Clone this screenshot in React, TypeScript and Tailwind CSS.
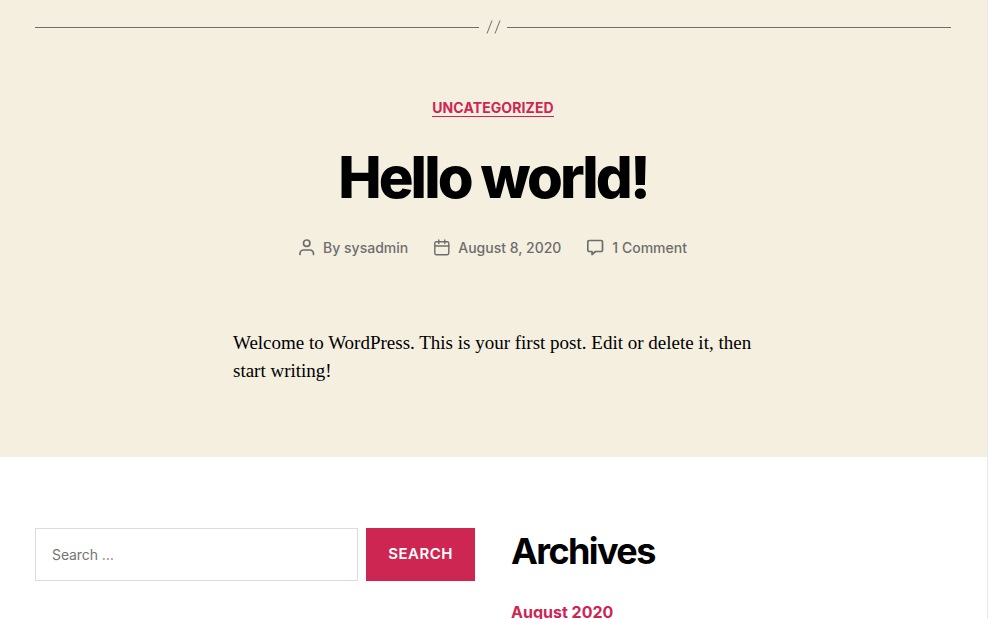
import React from "react";

function UserIcon() {
  return (
    <svg width="16" height="18" viewBox="0 0 16 18" fill="none" stroke="#6d6d6d" strokeWidth="1.7" strokeLinecap="round" aria-hidden="true">
      <path d="M1 15.500v-1A3.500 3.500 0 0 1 4.500 11h6.500A3.500 3.500 0 0 1 14.500 14.500v1" />
      <circle cx="7.700" cy="4.200" r="3.200" />
    </svg>
  );
}

function CalendarIcon() {
  return (
    <svg width="16" height="18" viewBox="0 0 16 18" fill="none" stroke="#6d6d6d" strokeWidth="1.4" strokeLinecap="round" aria-hidden="true">
      <rect x=".8" y="2.700" width="14" height="13" rx="1.600" />
      <path d="M1 7h14M4.800 1v3.500M10.800 1v3.500" />
    </svg>
  );
}

function CommentIcon() {
  return (
    <svg width="17" height="18" viewBox="0 0 17 18" fill="none" stroke="#6d6d6d" strokeWidth="1.7" strokeLinejoin="round" aria-hidden="true">
      <path d="M2.300 1.500h11.700a1.500 1.500 0 0 1 1.500 1.500v8a1.500 1.500 0 0 1-1.500 1.500H8.500L5 15.500v-3H2.300A1.500 1.500 0 0 1 .8 11V3a1.500 1.500 0 0 1 1.500-1.500z" />
    </svg>
  );
}

export default function App() {
  return (
    <div className="min-h-screen border-r border-[#e8e8e8] bg-white font-['Inter',sans-serif] text-black">
      <main className="bg-[#f5efe0] pt-5 pr-9 pb-[72px] pl-[35px]">
        <div className="flex items-center gap-[6px]" role="separator">
          <span className="h-px flex-1 bg-[#6d6d6d]" />
          <svg width="16" height="14" viewBox="0 0 16 14" stroke="#6d6d6d" fill="none" aria-hidden="true">
            <path d="M2 13.500 7 .5M10 13.500 15 .5" />
          </svg>
          <span className="h-px flex-1 bg-[#6d6d6d]" />
        </div>
        <article>
          <header className="flex flex-col items-center pt-[66px]">
            <a href="#category" className="border-b border-[#cd2653] text-sm leading-4 font-bold tracking-[0.1px] text-[#cd2653] uppercase">Uncategorized</a>
            <h1 className="mt-7 text-[58px] leading-[64px] font-extrabold tracking-[-0.05em]">Hello world!</h1>
            <ul className="mt-[29px] flex items-center gap-[26px] text-sm leading-5 font-medium text-[#6d6d6d]">
              <li className="flex items-center gap-2"><UserIcon /><span>By <a href="#author">sysadmin</a></span></li>
              <li className="flex items-center gap-2"><CalendarIcon /><a href="#date">August 8, 2020</a></li>
              <li className="flex items-center gap-2"><CommentIcon /><a href="#comments">1 Comment</a></li>
            </ul>
          </header>
          <p className="mx-auto mt-[71px] max-w-[520px] font-['Liberation_Serif',serif] text-[19px] leading-7">
            Welcome to WordPress. This is your first post. Edit or delete it, then start writing!
          </p>
        </article>
      </main>
      <footer className="grid grid-cols-2 gap-9 pt-[71px] pr-9 pl-[35px]">
        <form className="flex items-start gap-2" onSubmit={(e) => e.preventDefault()}>
          <input type="search" aria-label="Search for:" placeholder="Search …" className="h-[53px] min-w-0 flex-1 border border-[#dcdcdc] px-4 text-sm tracking-[-0.1px] placeholder:text-[#757575]" />
          <button type="submit" className="h-[53px] bg-[#cd2653] px-[22px] text-[15px] font-semibold tracking-[0.5px] text-white uppercase">Search</button>
        </form>
        <section>
          <h2 className="text-4xl leading-[46px] font-bold tracking-[-1.6px]">Archives</h2>
          <ul className="mt-7 text-base leading-5 font-bold text-[#cd2653]"><li><a href="#august">August 2020</a></li></ul>
        </section>
      </footer>
    </div>
  );
}
